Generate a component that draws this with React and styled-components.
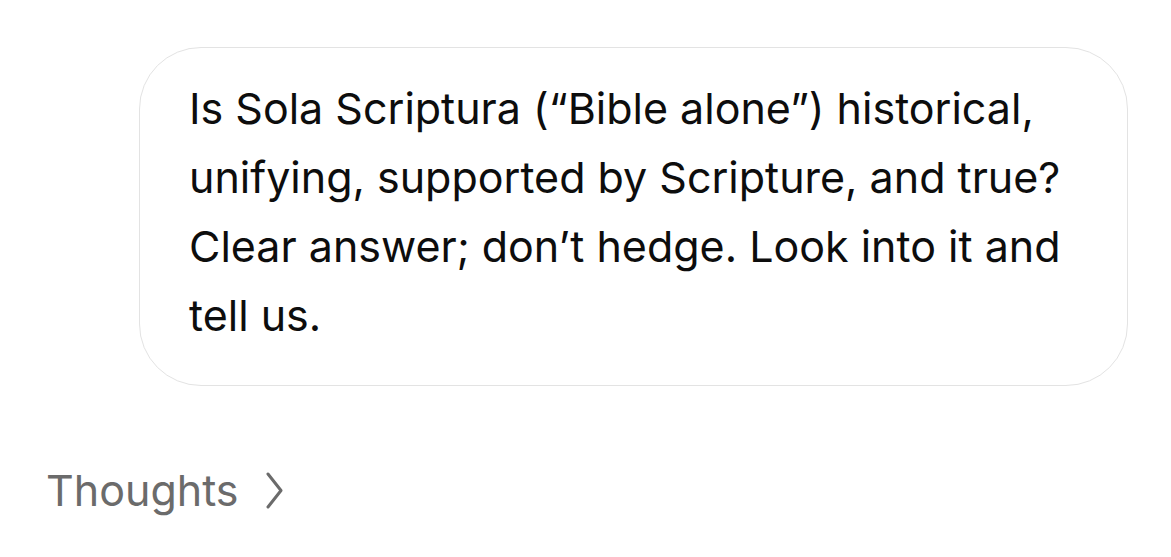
import React from "react";
import styled, { createGlobalStyle } from "styled-components";

const Global = createGlobalStyle`
  html, body { margin: 0; padding: 0; background: #ffffff; }
  body { font-family: Inter, "Noto Sans", sans-serif; -webkit-font-smoothing: antialiased; }
`;

const Page = styled.div`
  display: flex;
  flex-direction: column;
  padding: 47px 43px 0 46px;
`;

const Row = styled.div`
  display: flex;
  justify-content: flex-end;
`;

const Bubble = styled.div`
  width: 989px;
  box-sizing: border-box;
  border: 1.5px solid #e3e3e3;
  border-radius: 62px;
  padding: 26px 50px 35px 49px;
  font-size: 43px;
  line-height: 69px;
  color: #0d0d0d;
`;

const Thoughts = styled.button`
  display: flex;
  align-items: center;
  gap: 27px;
  margin-top: 78px;
  padding: 0;
  border: 0;
  background: none;
  font-family: inherit;
  font-size: 43px;
  line-height: 52px;
  color: #6b6b6b;
  align-self: flex-start;
`;

export default function App() {
  return (
    <>
      <Global />
      <Page>
        <Row>
          <Bubble>
            Is Sola Scriptura (“Bible alone”) historical, unifying, supported by Scripture, and true? Clear answer; don’t hedge. Look into it and tell us.
          </Bubble>
        </Row>
        <Thoughts>
          Thoughts
          <svg width="17" height="37" viewBox="0 0 17 37" fill="none">
            <path d="M2 2 L15 18.5 L2 35" stroke="#6b6b6b" strokeWidth="3" strokeLinecap="round" strokeLinejoin="round" />
          </svg>
        </Thoughts>
      </Page>
    </>
  );
}
